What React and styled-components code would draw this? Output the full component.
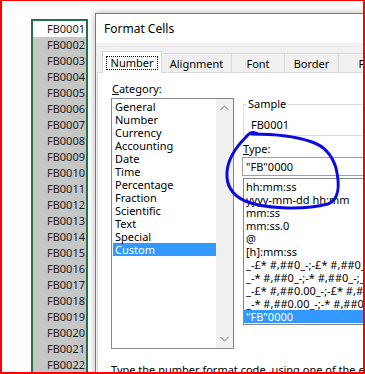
import React from 'react';
import styled, { createGlobalStyle } from 'styled-components';

const GlobalStyle = createGlobalStyle`
  html, body {
    margin: 0;
    padding: 0;
    background: #fff;
  }
  body {
    font-family: "Noto Sans", "Open Sans", sans-serif;
    font-size: 11px;
    color: #000;
  }
`;

const Frame = styled.div`
  position: relative;
  width: 365px;
  height: 374px;
  box-sizing: border-box;
  border: 2px solid #ff0000;
  border-top-width: 1px;
  overflow: hidden;
  display: flex;
  align-items: flex-start;
  background: #fff;
`;

const Sheet = styled.div`
  flex: 0 0 auto;
  padding: 18px 0 0 29px;
`;

const Column = styled.div`
  width: 53px;
  border: 2px solid #217346;
`;

const Cell = styled.div`
  height: 16px;
  line-height: 16px;
  text-align: right;
  padding-right: 1px;
  color: #1a1a1a;
  background: ${p => (p.active ? '#fff' : '#c6c6c6')};
`;

const Dialog = styled.div`
  flex: 0 0 auto;
  width: 470px;
  margin: 12px 0 0 7px;
  border: 1px solid #7a7a7a;
  background: #f0f0f0;
  box-shadow: 0 0 7px rgba(0, 0, 0, 0.3);
`;

const TitleBar = styled.div`
  height: 29px;
  line-height: 29px;
  padding-left: 8px;
  background: #fff;
  font-size: 12px;
`;

const Body = styled.div`
  padding: 8px 0 0 1px;
`;

const TabStrip = styled.div`
  display: flex;
  align-items: flex-end;
  height: 21px;
  padding-left: 5px;
`;

const Tab = styled.div`
  box-sizing: border-box;
  display: flex;
  align-items: center;
  justify-content: center;
  width: ${p => p.w}px;
  height: ${p => (p.selected ? 22 : 19)}px;
  margin-bottom: ${p => (p.selected ? -1 : 0)}px;
  position: relative;
  z-index: ${p => (p.selected ? 1 : 0)};
  background: ${p => (p.selected ? '#fff' : '#f0f0f0')};
  border: 1px solid #d9d9d9;
  border-bottom: none;
  border-left: ${p => (p.joined ? 'none' : '1px solid #d9d9d9')};
`;

const FocusRing = styled.span`
  line-height: 12px;
  padding: 0 4px;
  border: 1px dotted #000;
`;

const Panel = styled.div`
  height: 320px;
  padding: 9px 0 0 13px;
  border: 1px solid #d9d9d9;
  background: #fff;
`;

const TopRow = styled.div`
  display: flex;
  gap: 8px;
`;

const CategoryCol = styled.div`
  width: 123px;
  flex: 0 0 auto;
`;

const Label = styled.div`
  line-height: 14px;
  padding-left: 1px;
  margin-top: ${p => p.mt || 0}px;
`;

const Key = styled.span`
  text-decoration: underline;
`;

const ListBox = styled.div`
  box-sizing: border-box;
  display: flex;
  height: ${p => p.h}px;
  margin: 2px 0 0 ${p => p.ml || 0}px;
  border: 1px solid #828790;
  overflow: hidden;
`;

const Items = styled.div`
  flex: 1;
  min-width: 0;
  padding-top: 1px;
`;

const Item = styled.div`
  height: 13px;
  line-height: 13px;
  margin-left: ${p => p.indent || 0}px;
  padding-left: 2px;
  white-space: nowrap;
  background: ${p => (p.selected ? '#3399ff' : 'transparent')};
  color: ${p => (p.selected ? '#fff' : '#000')};
`;

const ScrollBar = styled.div`
  width: 17px;
  flex: 0 0 auto;
  display: flex;
  flex-direction: column;
  justify-content: space-between;
  align-items: center;
  padding: 6px 0 6px;
  background: #f0f0f0;
  position: relative;
  z-index: 1;
`;

const TypeCol = styled.div`
  flex: 1;
  padding-top: 15px;
`;

const Group = styled.fieldset`
  margin: 0 0 0 1px;
  padding: 7px 4px 3px 7px;
  border: 1px solid #dcdcdc;
  min-width: 0;
`;

const Legend = styled.legend`
  padding: 0 1px;
  margin-left: -4px;
  line-height: 14px;
`;

const Value = styled.div`
  line-height: 14px;
`;

const Input = styled.div`
  box-sizing: border-box;
  height: 19px;
  line-height: 17px;
  margin-top: 1px;
  padding-left: 3px;
  border: 1px solid #a0a0a0;
`;

const Hint = styled.div`
  line-height: 14px;
  margin-top: 14px;
  white-space: nowrap;
`;

const Ink = styled.svg`
  position: absolute;
  top: -1px;
  left: -2px;
  pointer-events: none;
  z-index: 5;
`;

const Chevron = ({ up }) => (
  <svg width="9" height="6" viewBox="0 0 9 6">
    <polyline
      points={up ? '0.5,5 4.5,1 8.5,5' : '0.5,1 4.5,5 8.5,1'}
      fill="none"
      stroke="#a6a6a6"
      strokeWidth="1.2"
    />
  </svg>
);

const cells = Array.from({ length: 24 }, (_, i) => `FB${String(i + 1).padStart(4, '0')}`);

const tabs = [
  { name: 'Number', w: 60 },
  { name: 'Alignment', w: 70 },
  { name: 'Font', w: 53 },
  { name: 'Border', w: 54 },
  { name: 'Fill', w: 54 },
  { name: 'Protection', w: 74 },
];

const categories = [
  'General', 'Number', 'Currency', 'Accounting', 'Date', 'Time',
  'Percentage', 'Fraction', 'Scientific', 'Text', 'Special', 'Custom',
];

const formats = [
  'hh:mm:ss',
  'yyyy-mm-dd hh:mm',
  'mm:ss',
  'mm:ss.0',
  '@',
  '[h]:mm:ss',
  '_-£* #,##0_-;-£* #,##0_-;_-£* "-"_-;_-@_-',
  '_-* #,##0_-;-* #,##0_-;_-* "-"_-;_-@_-',
  '_-£* #,##0.00_-;-£* #,##0.00_-;_-£* "-"??_-;_-@_-',
  '_-* #,##0.00_-;-* #,##0.00_-;_-* "-"??_-;_-@_-',
  '"FB"0000',
];

export default function App() {
  return (
    <Frame>
      <GlobalStyle />
      <Sheet>
        <Column>
          {cells.map((c, i) => (
            <Cell key={c} active={i === 0}>{c}</Cell>
          ))}
        </Column>
      </Sheet>

      <Dialog>
        <TitleBar>Format Cells</TitleBar>
        <Body>
          <TabStrip>
            {tabs.map((t, i) => (
              <Tab key={t.name} w={t.w} selected={i === 0} joined={i > 0}>
                {i === 0 ? <FocusRing>{t.name}</FocusRing> : t.name}
              </Tab>
            ))}
          </TabStrip>
          <Panel>
            <TopRow>
              <CategoryCol>
                <Label><Key>C</Key>ategory:</Label>
                <ListBox h={251}>
                  <Items>
                    {categories.map(c => (
                      <Item key={c} indent={1} selected={c === 'Custom'}>{c}</Item>
                    ))}
                  </Items>
                  <ScrollBar>
                    <Chevron up />
                    <Chevron />
                  </ScrollBar>
                </ListBox>
              </CategoryCol>
              <TypeCol>
                <Group>
                  <Legend>Sample</Legend>
                  <Value>FB0001</Value>
                </Group>
                <Label mt={6}><Key>T</Key>ype:</Label>
                <Input>"FB"0000</Input>
                <ListBox h={147} ml={1}>
                  <Items>
                    {formats.map(f => (
                      <Item key={f} selected={f === '"FB"0000'}>{f}</Item>
                    ))}
                  </Items>
                </ListBox>
              </TypeCol>
            </TopRow>
            <Hint>Type the number format code, using one of the existing codes as a starting point.</Hint>
          </Panel>
        </Body>
      </Dialog>

      <Ink width="365" height="374" viewBox="0 0 365 374">
        <path
          d="M 258 134 C 253 131, 249 133, 246 137 C 238 145, 228 158, 227 172 C 226 186, 232 195, 245 201 C 262 208, 300 211, 328 204 C 339 200, 340 185, 336 168 C 332 155, 324 146, 312 142 C 295 136, 275 134, 252 134"
          fill="none"
          stroke="#0b0be0"
          strokeWidth="3"
          strokeLinecap="round"
          strokeLinejoin="round"
        />
      </Ink>
    </Frame>
  );
}
